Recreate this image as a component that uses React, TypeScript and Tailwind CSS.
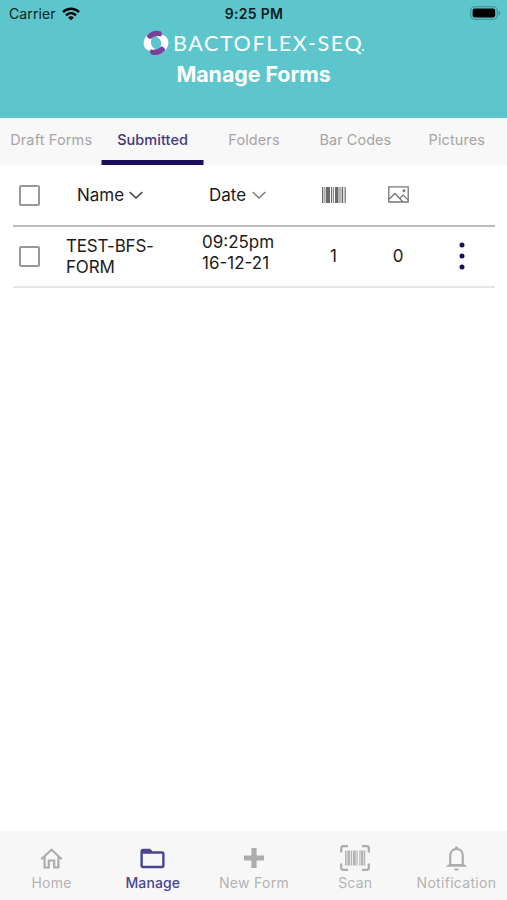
import clsx from "clsx";
import { ReactNode } from "react";
import { MdFolderOpen } from "react-icons/md";

const tabs = [
  { label: "Draft Forms", className: "tracking-[0.15px]" },
  { label: "Submitted", className: "tracking-[0.05px]" },
  { label: "Folders", className: "tracking-[0.1px]" },
  { label: "Bar Codes", className: "tracking-[0.05px]" },
  { label: "Pictures", className: "tracking-[0.1px]" },
];

const forms = [
  { name: "TEST-BFS-FORM", time: "09:25pm", date: "16-12-21", barcodes: 1, pictures: 0 },
];

const grid = "grid grid-cols-[53px_136px_111px_41px_88px_40px]";

function WifiIcon() {
  return (
    <svg width="18" height="14" viewBox="0 0 18 14" fill="none" stroke="#000" strokeWidth="2.4">
      <path d="M1 5.1C5.5.7 12.5.7 17 5.1" />
      <path d="M4 8.3c2.9-2.7 7.1-2.7 10 0" />
      <path d="M9 13.2 6.1 10.4c1.7-1.5 4.1-1.5 5.8 0z" fill="#000" stroke="none" />
    </svg>
  );
}

function BatteryIcon() {
  return (
    <svg width="31" height="14" viewBox="0 0 31 14">
      <rect x=".7" y=".7" width="26.6" height="12.6" rx="4" fill="none" stroke="#3e8c91" strokeWidth="1.1" />
      <rect x="2.6" y="2.6" width="22.6" height="8.8" rx="2.2" />
      <path d="M28.6 4.7c2 .7 2 4 0 4.7z" fill="#3e8c91" />
    </svg>
  );
}

function LogoMark() {
  return (
    <svg width="26" height="26" viewBox="0 0 26 26">
      <path d="M4.2 5C-.2 9.5-.4 15.5 2.8 18.8c2.8 2.5 7 2.2 9.800.4C8.400 17.500 6.600 13 8.800 8 6.800 7.500 5 6.500 4.200 5z" fill="#fff" />
      <path d="M21.800 20.700c4.400-4.500 4.600-10.500 1.400-13.800-2.800-2.500-7-2.200-9.800-.4 4.200 1.700 6 6.200 3.800 11.200 2 .5 3.800 1.500 4.600 3z" fill="#fff" />
      <path d="M3.800 6C6.800 1.200 13.500-.4 17.400 1.300c2.100 1.300 1.700 3.500.6 5.200-4-1.300-7.600-.2-10.300 2.600C5.800 8.800 4.200 7.800 3.800 6z" fill="#7d3f9b" />
      <path d="M22.200 19.700c-3 4.800-9.700 6.400-13.600 4.700-2.100-1.300-1.700-3.500-.6-5.200 4 1.300 7.600.2 10.300-2.600 1.900.3 3.500 1.300 3.900 3.100z" fill="#7d3f9b" />
    </svg>
  );
}

function ChevronIcon({ className }: { className?: string }) {
  return (
    <svg width="14" height="8" viewBox="0 0 14 8" fill="none" stroke="currentColor" strokeWidth="1.3" className={className}>
      <path d="m.7 1 6.3 6 6.3-6" />
    </svg>
  );
}

function BarcodeIcon() {
  return (
    <svg width="24" height="16" viewBox="0 0 24 16" fill="#6b6b6b">
      <path d="M0 0h1.3v16H0zM2.400 0h.9v16h-.9zM4 0h4v16H4zM9 0h1v16H9zM10.800 0h1v16h-1zM13 0h3.500v16H13zM17.500 0h1v16h-1zM19.600 0h1.600v16h-1.600zM22.600 0h1.200v16h-1.200z" />
    </svg>
  );
}

function PictureIcon() {
  return (
    <svg width="21" height="17" viewBox="0 0 21 17" fill="none" stroke="#777" strokeWidth="1.3">
      <path d="M.8.8h19.400v15.200H.8z" />
      <path d="m1 13.300 6-5.800 7.800 8.200M11.800 12.300l3.400-3.200 5 5" />
      <circle cx="16" cy="4.700" r=".8" fill="#777" />
    </svg>
  );
}

function HomeIcon() {
  return (
    <svg width="23" height="21" viewBox="0 0 23 21" fill="none" stroke="#adadad" strokeWidth="2.2">
      <path d="M1.200 11.200 11.500 1.700l10.300 9.500" />
      <path d="M4.600 9v10.500h4.200v-7h5.400v7h4.200V9" />
    </svg>
  );
}

function ScanIcon() {
  return (
    <svg width="30" height="26" viewBox="0 0 30 26">
      <path
        d="M1.200 7.500V3.200q0-2 2-2H8M22 1.200h4.800q2 0 2 2v4.300M28.800 18.500v4.300q0 2-2 2H22M8 24.800H3.200q-2 0-2-2v-4.300"
        fill="none"
        stroke="#adadad"
        strokeWidth="2.3"
      />
      <path d="M5 5.500h1.600v15H5zM7.400 5.500h2.800v15H7.400zM11 5.500h1.200v15H11zM13 5.500h2.800v15H13zM16.500 5.500h1.200v15h-1.200zM19.300 5.500h1.200v15h-1.200zM21 5.500h2.400v15H21zM24 5.500h1.200v15H24z" fill="#b3b3b3" />
    </svg>
  );
}

function PlusIcon() {
  return (
    <svg width="20" height="20" viewBox="0 0 20 20" fill="#adadad">
      <path d="M7.400 0h5.200v7.400H20v5.200h-7.400V20H7.400v-7.400H0V7.400h7.400z" />
    </svg>
  );
}

function BellIcon() {
  return (
    <svg width="21" height="25" viewBox="0 0 21 25">
      <path d="M4.200 20V10.500C4.200 6 6.500 3 10.500 3s6.300 3 6.300 7.500V20" fill="none" stroke="#adadad" strokeWidth="2.2" />
      <path d="M9 3V1.800a1.500 1.500 0 0 1 3 0V3zM0 20.700c0-.6.4-1 1-1.200l2.500-1.500h14l2.500 1.500c.6.200 1 .6 1 1.200zM8 22.500h5c-.3 1.500-1.300 2.200-2.500 2.200S8.300 24 8 22.500z" fill="#adadad" />
    </svg>
  );
}

function Checkbox() {
  return (
    <span
      role="checkbox"
      aria-checked="false"
      className="size-[21px] rounded-[2px] border-2 border-[#999999]"
    />
  );
}

interface NavItemProps {
  label: string;
  active?: boolean;
  className?: string;
  children: ReactNode;
}

function NavItem({ label, active, className, children }: NavItemProps) {
  return (
    <button className={clsx("flex flex-col items-center", active ? "text-[#484691]" : "text-[#adadad]")}>
      <span className="mb-px flex h-[30px] items-center">{children}</span>
      <span
        className={clsx(
          "text-[14px] leading-[18px] whitespace-nowrap",
          active ? "font-medium" : "text-[#b3b3b3]",
          className,
        )}
      >
        {label}
      </span>
    </button>
  );
}

export default function App() {
  return (
    <div className="flex h-[900px] w-[507px] flex-col overflow-hidden bg-white font-['Inter',sans-serif] text-[#1b1b1b]">
      <header className="h-[118px] shrink-0 bg-[#5cc6cc]">
        <div className="grid h-[27px] grid-cols-3 items-center px-[9px] text-[#0c2021]">
          <div className="flex items-center gap-[6px] text-[14px] tracking-[0.1px]">
            Carrier
            <WifiIcon />
          </div>
          <span className="pl-px text-center text-[14px] font-semibold tracking-[0.3px]">9:25 PM</span>
          <div className="-mt-px -mr-[3px] flex justify-end">
            <BatteryIcon />
          </div>
        </div>
        <div className="flex h-[31px] items-center pl-[143px] text-white">
          <LogoMark />
          <span className="mt-[2px] ml-[4px] font-['Lato',sans-serif] text-[21.5px] leading-none tracking-[1.6px]">
            BACTOFLEX-SEQ
          </span>
          <span className="mt-[15px] -ml-px size-[1.5px] rounded-full bg-white" />
        </div>
        <h1 className="text-center text-[21.4px] leading-[32px] font-bold tracking-[-0.05px] text-white">
          Manage Forms
        </h1>
      </header>

      <nav className="grid h-[47px] shrink-0 grid-cols-5 bg-[#f8f8f8]">
        {tabs.map((tab) => (
          <button
            key={tab.label}
            className={clsx(
              "flex translate-x-[0.5px] justify-center border-b-[5px] pt-[12px] text-[14.5px] leading-[20px] whitespace-nowrap",
              tab.label === "Submitted"
                ? "border-[#1b0f5c] font-medium text-[#43387f]"
                : "border-transparent text-[#a5a5a5]",
              tab.className,
            )}
          >
            {tab.label}
          </button>
        ))}
      </nav>

      <main className="mr-[12px] ml-[13px] flex-1 text-[17px]">
        <div className={clsx(grid, "h-[61.5px] items-center border-b-2 border-[#bbbbbb]")}>
          <div className="flex pt-px pl-[6px]">
            <Checkbox />
          </div>
          <div className="flex items-center gap-[5px] pt-px pl-[11px]">
            Name
            <ChevronIcon className="text-[#333]" />
          </div>
          <div className="flex items-center gap-[6px] pt-px pl-[7px]">
            Date
            <ChevronIcon className="text-[#777]" />
          </div>
          <div className="flex pl-[9px]">
            <BarcodeIcon />
          </div>
          <div className="flex pl-[34px]">
            <PictureIcon />
          </div>
        </div>
        {forms.map((form) => (
          <div key={form.name} className={clsx(grid, "h-[61px] items-center border-b-2 border-[#e6e6e6] leading-[21px]")}>
            <div className="flex pl-[6px]">
              <Checkbox />
            </div>
            <div className="w-[100px] pt-[2px] tracking-[-0.2px]">{form.name}</div>
            <div className="-mt-[6px]">
              <div>{form.time}</div>
              <div>{form.date}</div>
            </div>
            <div className="text-center">{form.barcodes}</div>
            <div className="text-center">{form.pictures}</div>
            <div className="flex justify-center">
              <svg width="6" height="28" viewBox="0 0 6 28" fill="#1b0f5c">
                <circle cx="3" cy="3" r="2.5" />
                <circle cx="3" cy="14" r="2.5" />
                <circle cx="3" cy="25" r="2.5" />
              </svg>
            </div>
          </div>
        ))}
      </main>

      <footer className="grid h-[69px] shrink-0 grid-cols-5 items-start bg-[#f7f7f7] pt-[12px] pl-px">
        <NavItem label="Home" className="tracking-[0.3px]">
          <HomeIcon />
        </NavItem>
        <NavItem label="Manage" active className="tracking-[0.1px]">
          <MdFolderOpen size={29} />
        </NavItem>
        <NavItem label="New Form" className="tracking-[0.3px]">
          <PlusIcon />
        </NavItem>
        <NavItem label="Scan" className="tracking-[0.2px]">
          <ScanIcon />
        </NavItem>
        <NavItem label="Notification" className="tracking-[0.3px]">
          <BellIcon />
        </NavItem>
      </footer>
    </div>
  );
}
